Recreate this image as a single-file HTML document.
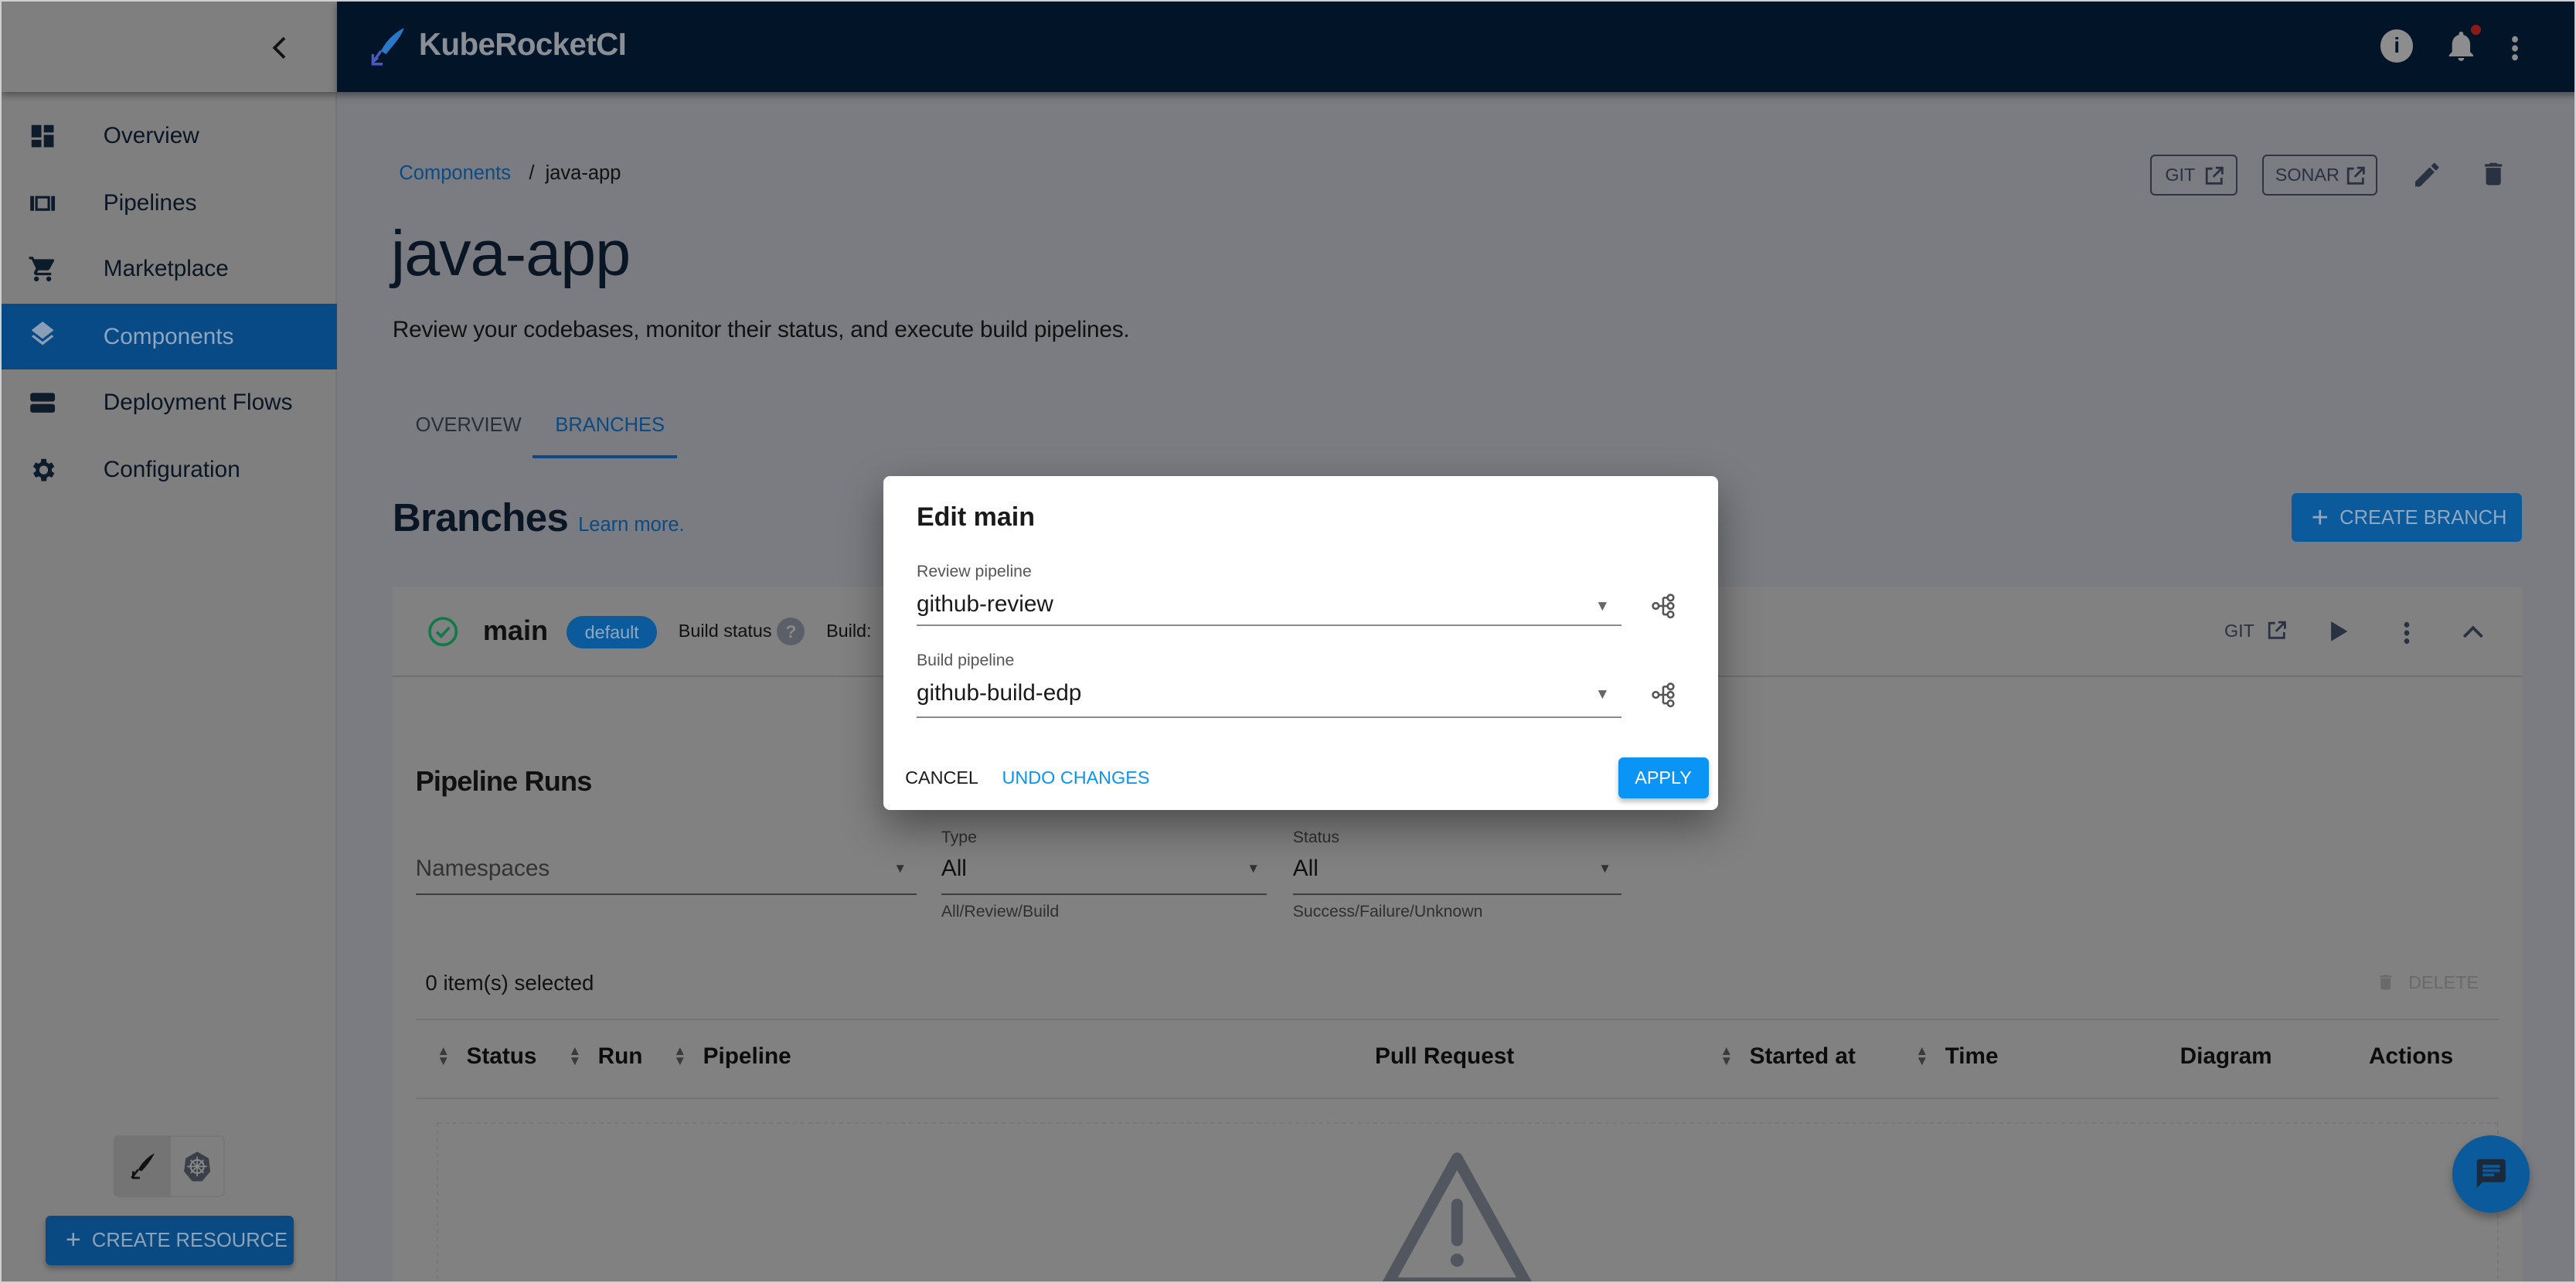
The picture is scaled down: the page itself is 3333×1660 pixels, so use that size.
<!DOCTYPE html>
<html><head><meta charset="utf-8"><style>
*{margin:0;padding:0;box-sizing:border-box}
html,body{width:3333px;height:1660px;overflow:hidden;background:#d8d8d8}
#w{zoom:2.12564;width:1568px;height:781px;position:relative;font-family:"Liberation Sans",sans-serif;color:#0a1624;background:#7b7c81;overflow:hidden;border:1px solid #cfcfcf}
.a{position:absolute;white-space:nowrap}
.nav{position:absolute;left:0;width:204px;height:40px;font-size:14px;display:flex;align-items:center}
.nav span{position:absolute;left:62px}
.nav svg{position:absolute;left:16px;top:11px}
.th{font-size:14px;font-weight:bold;color:#0c0c0c}
.sort{font-size:8px;color:#3a3a3a;line-height:6px}
.ul{position:absolute;height:1px;background:#3d3d3d}
.lab{font-size:10px;color:#2f2f2f}
</style></head><body><div id="w">
<!-- sidebar -->
<div class="a" style="left:0;top:0;width:204px;height:781px;background:#7f7f7f;border-right:1px solid #747478"></div>
<div class="a" style="left:0;top:0;width:204px;height:55px;background:#7f7f7f;box-shadow:0 2px 4px rgba(0,0,0,.35)"></div>
<svg class="a" style="left:164px;top:21px" width="10" height="14" viewBox="0 0 10 14"><path d="M8 1 L2 7 L8 13" fill="none" stroke="#111" stroke-width="1.8"/></svg>
<div class="nav" style="top:62px"><svg width="18" height="18" viewBox="0 0 24 24"><path fill="#0d1b2a" d="M3 13h8V3H3zm0 8h8v-6H3zm10 0h8V11h-8zm0-18v6h8V3z"/></svg><span>Overview</span></div>
<div class="nav" style="top:103px"><svg width="18" height="18" viewBox="0 0 24 24"><path fill="#0d1b2a" d="M2 6h3v12H2zm4 0h12v12H6zm13 0h3v12h-3zm-11 2v8h8V8z"/></svg><span>Pipelines</span></div>
<div class="nav" style="top:143px"><svg width="18" height="18" viewBox="0 0 24 24"><path fill="#0d1b2a" d="M7 18a2 2 0 1 0 0 4 2 2 0 0 0 0-4M1 2v2h2l3.6 7.6-1.4 2.4A2 2 0 0 0 7 17h12v-2H7.4l1.1-2h7.5c.7 0 1.4-.4 1.7-1l3.6-6.5A1 1 0 0 0 20.4 4H5.2l-.9-2zm16 16a2 2 0 1 0 0 4 2 2 0 0 0 0-4"/></svg><span>Marketplace</span></div>
<div class="nav" style="top:184px;background:#084a85;color:#8ea6bf"><svg width="18" height="18" viewBox="0 0 24 24"><path fill="#8a9fb5" d="M12 16.5l-7.4-5.7L3 12.1l9 7 9-7-1.6-1.3zM12 14l7.4-5.7L21 7l-9-7-9 7 1.6 1.3z"/></svg><span>Components</span></div>
<div class="nav" style="top:224px"><svg width="18" height="18" viewBox="0 0 24 24"><rect x="2" y="4" width="20" height="7" rx="2" fill="#0d1b2a"/><rect x="2" y="13" width="20" height="7" rx="2" fill="#0d1b2a"/></svg><span>Deployment Flows</span></div>
<div class="nav" style="top:265px"><svg width="18" height="18" viewBox="0 0 24 24"><path fill="#0d1b2a" d="M19.4 13a7.5 7.5 0 0 0 0-2l2.1-1.6-2-3.5-2.5 1a7 7 0 0 0-1.7-1L14.9 3h-4l-.4 2.9a7 7 0 0 0-1.7 1l-2.5-1-2 3.5L6.5 11a7.5 7.5 0 0 0 0 2l-2.1 1.6 2 3.5 2.5-1a7 7 0 0 0 1.7 1l.4 2.9h4l.4-2.9a7 7 0 0 0 1.7-1l2.5 1 2-3.5zM12.9 15.5a3.5 3.5 0 1 1 0-7 3.5 3.5 0 0 1 0 7"/></svg><span>Configuration</span></div>
<div class="a" style="left:68px;top:690px;width:68px;height:38px;border:1px solid #777;border-radius:3px;background:#7f7f7f"></div>
<div class="a" style="left:68px;top:690px;width:35px;height:38px;background:#747474;border-radius:3px 0 0 3px"></div>
<svg class="a" style="left:77px;top:700px" width="18" height="18" viewBox="0 0 18 18"><path d="M16 1 C12 3 8 7 6 11 L8 12 C11 9 14 5 16 1Z" fill="#111"/><path d="M6 11 L2 16 M3 12 v4 h4" fill="none" stroke="#111" stroke-width="1.3"/></svg>
<svg class="a" style="left:110px;top:699px" width="18" height="20" viewBox="0 0 18 20"><path d="M9 1 L16 5 L17 13 L12 19 H6 L1 13 L2 5Z" fill="#3a3f48"/><circle cx="9" cy="10" r="4" fill="none" stroke="#888" stroke-width="1"/><path d="M9 4v12M3 10h12M5 6l8 8M13 6l-8 8" stroke="#888" stroke-width=".8"/></svg>
<div class="a" style="left:27px;top:739px;width:151px;height:30px;background:#0a4a83;border-radius:3px;box-shadow:0 2px 3px rgba(0,0,0,.3);color:#8da3ba;font-size:12px;line-height:30px;padding-left:12px"><span style="font-size:16px;vertical-align:-1px">+</span>&nbsp; CREATE RESOURCE</div>
<!-- topbar -->
<div class="a" style="left:204px;top:0;width:1364px;height:55px;background:#011428;box-shadow:0 2px 4px rgba(0,0,0,.4)"></div>
<svg class="a" style="left:223px;top:15px" width="24" height="26" viewBox="0 0 24 26"><path d="M22 1 C16 4 11 9 8 15 L11 17 C15 12 20 7 22 1Z" fill="#2a78c8"/><path d="M8 15 L3 22 M3 17 v6 h6 M6 19 l-2 2" fill="none" stroke="#4a5ac0" stroke-width="1.6"/></svg>
<div class="a" style="left:254px;top:15px;font-size:19px;font-weight:bold;color:#8a8f96;letter-spacing:-0.3px">KubeRocketCI</div>
<div class="a" style="left:1448px;top:17px;width:20px;height:20px;border-radius:50%;background:#8d8d8d;color:#011428;font-size:13px;font-weight:bold;text-align:center;line-height:20px">i</div>
<svg class="a" style="left:1486px;top:16px" width="22" height="22" viewBox="0 0 24 24"><path fill="#8d8d8d" d="M12 22a2 2 0 0 0 2-2h-4a2 2 0 0 0 2 2m6-6v-5c0-3-1.6-5.6-4.5-6.3V4a1.5 1.5 0 0 0-3 0v.7C7.6 5.4 6 8 6 11v5l-2 2v1h16v-1z"/></svg>
<div class="a" style="left:1503px;top:14px;width:6px;height:6px;border-radius:50%;background:#8a1a1a"></div>
<div class="a" style="left:1528px;top:20px;width:4px;height:16px;background:radial-gradient(circle,#8d8d8d 1.8px,transparent 2px) 0 0/4px 5.5px repeat-y"></div>
<!-- main content -->
<div class="a" style="left:242px;top:98px;font-size:12px;color:#0b4a82">Components</div>
<div class="a" style="left:321px;top:98px;font-size:12px;color:#111">/&nbsp; java-app</div>
<div class="a" style="left:237px;top:131px;font-size:39px;color:#0a1624;letter-spacing:-0.5px">java-app</div>
<div class="a" style="left:238px;top:192px;font-size:14px;color:#111;letter-spacing:-0.1px">Review your codebases, monitor their status, and execute build pipelines.</div>
<div class="a" style="left:252px;top:251px;font-size:12px;color:#2a2f36">OVERVIEW</div>
<div class="a" style="left:337px;top:251px;font-size:12px;color:#0b4a82">BRANCHES</div>
<div class="a" style="left:323px;top:276px;width:88px;height:2px;background:#0b4a82"></div>
<div class="a" style="left:238px;top:300px;font-size:24px;font-weight:bold;color:#0a1624;letter-spacing:-0.3px">Branches</div>
<div class="a" style="left:351px;top:312px;font-size:12px;color:#0b4a82">Learn more.</div>
<div class="a" style="left:1308px;top:93px;width:53px;height:25px;border:1px solid #2e3440;border-radius:3px;font-size:11px;color:#2a3140;line-height:23px;padding-left:8px">GIT</div>
<div class="a" style="left:1376px;top:93px;width:70px;height:25px;border:1px solid #2e3440;border-radius:3px;font-size:11px;color:#2a3140;line-height:23px;padding-left:7px">SONAR</div>
<svg class="a" style="left:1341px;top:100px" width="12" height="12" viewBox="0 0 12 12"><path d="M5 1.5H1.5v9h9V7M7 1h4v4M11 1L5.5 6.5" fill="none" stroke="#2a3140" stroke-width="1.3"/></svg>
<svg class="a" style="left:1427px;top:100px" width="12" height="12" viewBox="0 0 12 12"><path d="M5 1.5H1.5v9h9V7M7 1h4v4M11 1L5.5 6.5" fill="none" stroke="#2a3140" stroke-width="1.3"/></svg>
<svg class="a" style="left:1467px;top:96px" width="19" height="19" viewBox="0 0 24 24"><path fill="#2a3140" d="M3 17.25V21h3.75L17.8 9.94l-3.75-3.75zM20.7 7.04a1 1 0 0 0 0-1.41l-2.34-2.34a1 1 0 0 0-1.41 0l-1.83 1.83 3.75 3.75z"/></svg>
<svg class="a" style="left:1508px;top:96px" width="18" height="18" viewBox="0 0 24 24"><path fill="#2a3140" d="M6 19c0 1.1.9 2 2 2h8a2 2 0 0 0 2-2V7H6zM19 4h-3.5l-1-1h-5l-1 1H5v2h14z"/></svg>
<div class="a" style="left:1394px;top:299px;width:140px;height:30px;background:#0a5a9c;border-radius:3px;color:#8fa8c2;font-size:12px;line-height:30px;padding-left:12px"><span style="font-size:18px;vertical-align:-2px">+</span>&nbsp; CREATE BRANCH</div>
<!-- card -->
<div class="a" style="left:238px;top:356px;width:1296px;height:430px;background:#818181"></div>
<div class="a" style="left:238px;top:410px;width:1296px;height:1px;background:#707070"></div>
<svg class="a" style="left:259px;top:374px" width="19" height="19" viewBox="0 0 20 20"><circle cx="10" cy="10" r="8.5" fill="none" stroke="#0f7a4a" stroke-width="1.8"/><path d="M6 10.2l2.8 2.8 5.2-5.6" fill="none" stroke="#0f7a4a" stroke-width="1.8"/></svg>
<div class="a" style="left:293px;top:373px;font-size:17px;font-weight:bold;color:#111">main</div>
<div class="a" style="left:344px;top:374px;width:55px;height:20px;border-radius:10px;background:#0a5a9c;color:#8fa8c2;font-size:11px;text-align:center;line-height:20px">default</div>
<div class="a" style="left:412px;top:377px;font-size:11px;color:#111">Build status</div>
<div class="a" style="left:472px;top:375px;width:17px;height:17px;border-radius:50%;background:#5a5f68;color:#8a8a8a;font-size:11px;font-weight:bold;text-align:center;line-height:17px">?</div>
<div class="a" style="left:502px;top:377px;font-size:11px;color:#111">Build:</div>
<div class="a" style="left:1353px;top:377px;font-size:11px;color:#2a3140">GIT</div>
<svg class="a" style="left:1379px;top:377px" width="12" height="12" viewBox="0 0 12 12"><path d="M5 1.5H1.5v9h9V7M7 1h4v4M11 1L5.5 6.5" fill="none" stroke="#2a3140" stroke-width="1.3"/></svg>
<svg class="a" style="left:1417px;top:377px" width="12" height="13" viewBox="0 0 12 13"><path d="M1 0.5 L11 6.5 L1 12.5Z" fill="#2a3140"/></svg>
<div class="a" style="left:1462px;top:377px;width:4px;height:14px;background:radial-gradient(circle,#2a3140 1.5px,transparent 1.8px) 0 0/4px 5px repeat-y"></div>
<svg class="a" style="left:1498px;top:379px" width="13" height="9" viewBox="0 0 13 9"><path d="M1 7.5 L6.5 2 L12 7.5" fill="none" stroke="#2a3140" stroke-width="1.8"/></svg>
<div class="a" style="left:252px;top:465px;font-size:17px;font-weight:bold;color:#111;letter-spacing:-0.4px">Pipeline Runs</div>
<div class="a" style="left:252px;top:520px;font-size:14px;color:#333">Namespaces</div>
<div class="ul" style="left:252px;top:543px;width:305px"></div>
<div class="a" style="left:543px;top:523px;font-size:8px;color:#333">&#9660;</div>
<div class="a lab" style="left:572px;top:503px">Type</div>
<div class="a" style="left:572px;top:520px;font-size:14px;color:#111">All</div>
<div class="ul" style="left:572px;top:543px;width:198px"></div>
<div class="a" style="left:758px;top:523px;font-size:8px;color:#333">&#9660;</div>
<div class="a lab" style="left:572px;top:548px">All/Review/Build</div>
<div class="a lab" style="left:786px;top:503px">Status</div>
<div class="a" style="left:786px;top:520px;font-size:14px;color:#111">All</div>
<div class="ul" style="left:786px;top:543px;width:200px"></div>
<div class="a" style="left:972px;top:523px;font-size:8px;color:#333">&#9660;</div>
<div class="a lab" style="left:786px;top:548px">Success/Failure/Unknown</div>
<div class="a" style="left:258px;top:590px;font-size:13px;color:#111">0 item(s) selected</div>
<svg class="a" style="left:1445px;top:590px" width="12" height="14" viewBox="0 0 24 24"><path fill="#6a6a6a" d="M6 19c0 1.1.9 2 2 2h8a2 2 0 0 0 2-2V7H6zM19 4h-3.5l-1-1h-5l-1 1H5v2h14z"/></svg>
<div class="a" style="left:1465px;top:591px;font-size:11px;color:#6a6a6a">DELETE</div>
<div class="a" style="left:252px;top:619px;width:1268px;height:1px;background:#747474"></div>
<div class="a" style="left:252px;top:667px;width:1268px;height:1px;background:#747474"></div>
<div class="a sort" style="left:265px;top:636px">&#9650;<br>&#9660;</div><div class="a th" style="left:283px;top:634px">Status</div>
<div class="a sort" style="left:345px;top:636px">&#9650;<br>&#9660;</div><div class="a th" style="left:363px;top:634px">Run</div>
<div class="a sort" style="left:409px;top:636px">&#9650;<br>&#9660;</div><div class="a th" style="left:427px;top:634px">Pipeline</div>
<div class="a th" style="left:836px;top:634px">Pull Request</div>
<div class="a sort" style="left:1046px;top:636px">&#9650;<br>&#9660;</div><div class="a th" style="left:1064px;top:634px">Started at</div>
<div class="a sort" style="left:1165px;top:636px">&#9650;<br>&#9660;</div><div class="a th" style="left:1183px;top:634px">Time</div>
<div class="a th" style="left:1326px;top:634px">Diagram</div>
<div class="a th" style="left:1441px;top:634px">Actions</div>
<div class="a" style="left:265px;top:682px;width:1255px;height:110px;border:1px dashed #787878"></div>
<svg class="a" style="left:836px;top:698px" width="100" height="90" viewBox="0 0 100 90"><path d="M50 6 L92 82 H8 Z" fill="none" stroke="#52565e" stroke-width="7" stroke-linejoin="round"/><line x1="50" y1="34" x2="50" y2="56" stroke="#52565e" stroke-width="7" stroke-linecap="round"/><circle cx="50" cy="68" r="4" fill="#52565e"/></svg>
<div class="a" style="left:1492px;top:690px;width:47px;height:47px;border-radius:50%;background:#0a5a9c;box-shadow:0 3px 5px rgba(0,0,0,.3)"></div>
<svg class="a" style="left:1505px;top:703px" width="21" height="21" viewBox="0 0 24 24"><path fill="#1a2a3a" d="M20 2H4a2 2 0 0 0-2 2v18l4-4h14a2 2 0 0 0 2-2V4a2 2 0 0 0-2-2M6 9h12v2H6zm8 5H6v-2h8zm4-6H6V6h12z"/></svg>
<!-- dialog -->
<div class="a" style="left:537px;top:289px;width:508px;height:203px;background:#fff;border-radius:4px;box-shadow:0 10px 25px rgba(0,0,0,.4)"></div>
<div class="a" style="left:557px;top:305px;font-size:16px;font-weight:bold;color:#1a1a1a">Edit main</div>
<div class="a" style="left:557px;top:341px;font-size:10px;color:#555">Review pipeline</div>
<div class="a" style="left:557px;top:359px;font-size:14px;color:#1a1a1a">github-review</div>
<div class="a" style="left:970px;top:363px;font-size:9px;color:#666">&#9660;</div>
<div class="a" style="left:557px;top:379px;width:429px;height:1px;background:#8a8a8a"></div>
<div class="a" style="left:557px;top:395px;font-size:10px;color:#555">Build pipeline</div>
<div class="a" style="left:557px;top:413px;font-size:14px;color:#1a1a1a">github-build-edp</div>
<div class="a" style="left:970px;top:417px;font-size:9px;color:#666">&#9660;</div>
<div class="a" style="left:557px;top:435px;width:429px;height:1px;background:#8a8a8a"></div>
<svg class="a" style="left:1004px;top:360px" width="16" height="16" viewBox="0 0 16 16"><g fill="none" stroke="#555" stroke-width="1.2"><circle cx="3" cy="8" r="1.8"/><circle cx="12" cy="3" r="1.8"/><circle cx="12" cy="8" r="1.8"/><circle cx="12" cy="13.2" r="1.8"/><path d="M5 8h5M7.5 3v10.2M7.5 3h2.7M7.5 13.2h2.7"/></g></svg>
<svg class="a" style="left:1004px;top:414px" width="16" height="16" viewBox="0 0 16 16"><g fill="none" stroke="#555" stroke-width="1.2"><circle cx="3" cy="8" r="1.8"/><circle cx="12" cy="3" r="1.8"/><circle cx="12" cy="8" r="1.8"/><circle cx="12" cy="13.2" r="1.8"/><path d="M5 8h5M7.5 3v10.2M7.5 3h2.7M7.5 13.2h2.7"/></g></svg>
<div class="a" style="left:550px;top:466px;font-size:11px;color:#1a1a1a">CANCEL</div>
<div class="a" style="left:609px;top:466px;font-size:11px;color:#0a94f0">UNDO CHANGES</div>
<div class="a" style="left:984px;top:460px;width:55px;height:25px;background:#0a94f5;border-radius:3px;color:#fff;font-size:11px;text-align:center;line-height:25px;box-shadow:0 2px 3px rgba(0,0,0,.25)">APPLY</div>
</div></body></html>
